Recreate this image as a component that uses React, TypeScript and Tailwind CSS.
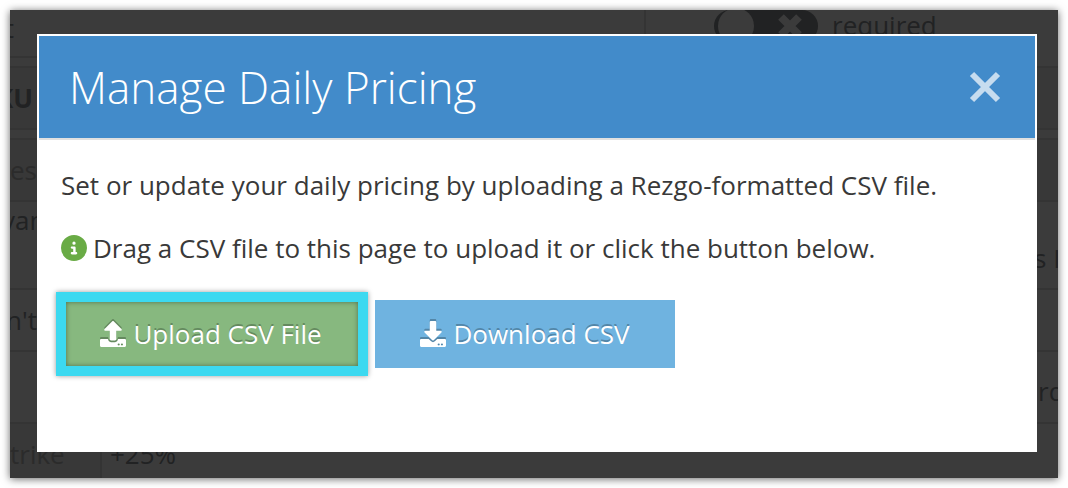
import { FaDownload, FaUpload } from "react-icons/fa";
import { FaCircleInfo } from "react-icons/fa6";

function FormBackdrop() {
  return (
    <div aria-hidden="true" className="absolute inset-0 flex flex-col overflow-hidden text-[26px] leading-9 text-[#212223]">
      <div className="flex h-12 shrink-0">
        <div className="flex w-[636px] shrink-0 border-r-2 border-b-2 border-[#343434]">
          <span className="flex w-1 justify-end">t</span>
        </div>
        <div className="ml-[68px] flex h-8 w-[104px] shrink-0 items-center justify-between rounded-full bg-[#212223] pr-3 pl-1">
          <span className="size-9 shrink-0 rounded-full bg-[#3b3b3b]" />
          <svg viewBox="0 0 32 32" className="size-8" stroke="#3b3b3b" strokeWidth="8">
            <path d="M7 7 25 25M25 7 7 25" />
          </svg>
        </div>
        <span className="ml-[14px] -mt-[3px]">required</span>
      </div>

      <div className="mt-2 flex h-16 shrink-0 items-center border-y-2 border-[#343434] bg-[#383838] font-bold">
        <span className="flex w-[23px] justify-end">SKU</span>
      </div>

      <div className="mt-2 flex h-16 shrink-0 items-center border-y-2 border-[#343434] bg-[#383838]">
        <span className="text-[#2b2b2b]">es</span>
      </div>

      <div className="flex h-[86px] shrink-0 justify-between">
        <span className="-ml-2">van</span>
        <span className="mt-[38px] w-6 whitespace-nowrap">s In</span>
      </div>

      <div className="flex h-16 shrink-0 items-center border-y-2 border-[#343434]">
        <span className="-ml-1">n't</span>
      </div>

      <div className="flex h-[72px] shrink-0 items-center justify-end border-b-2 border-[#343434]">
        <span className="mt-2 w-5">rd</span>
      </div>

      <div className="flex shrink-0 grow">
        <div className="w-[92px] border-r-2 border-[#343434] bg-[#383838] pt-3 text-[#2b2b2b]">trike</div>
        <div className="pt-3 pl-2">+25%</div>
      </div>
    </div>
  );
}

export default function App() {
  return (
    <div className="bg-white p-[10px] font-['Open_Sans','Noto_Sans',sans-serif]">
      <div className="relative bg-[#3b3b3b] pt-6 pr-[21px] pb-[26px] pl-[27px] shadow-[0_1px_8px_rgba(0,0,0,0.6)]">
        <FormBackdrop />

        <div role="dialog" aria-labelledby="dialog-title" className="relative border-2 border-white bg-white text-[#393939]">
          <div className="flex h-[104px] items-center justify-between border-b-2 border-[#e0e0e0] bg-[#428bca] pr-8 pl-[30px]">
            <h1 id="dialog-title" className="text-[44px] leading-[60px] font-light text-white">
              Manage Daily Pricing
            </h1>
            <button type="button" aria-label="Close" className="text-[#c6dcef]">
              <svg viewBox="0 0 36 36" className="size-9" stroke="currentColor" strokeWidth="6">
                <path d="M5 5 31 31M31 5 5 31" />
              </svg>
            </button>
          </div>

          <div className="px-[17px] pt-[27px] pb-[74px] text-[26px] leading-9">
            <p className="px-[5px]">Set or update your daily pricing by uploading a Rezgo-formatted CSV file.</p>
            <p className="mt-[27px] flex items-center gap-[6px] px-[5px]">
              <FaCircleInfo className="size-[26px] shrink-0 text-[#69ab45]" />
              Drag a CSV file to this page to upload it or click the button below.
            </p>

            <div className="mt-[26px] flex items-center gap-[7px] text-white">
              <div className="border-[10px] border-[#3cd9f0] shadow-[0_0_5px_rgba(0,0,0,0.4)]">
                <button
                  type="button"
                  className="flex h-16 w-[292px] items-center justify-center gap-[7px] bg-[#87b87f] pr-[2px] shadow-[inset_0_0_5px_rgba(0,0,0,0.4)] text-shadow-[0_-2px_0_rgba(0,0,0,0.25)]"
                >
                  <FaUpload className="size-[26px] drop-shadow-[0_-2px_0_rgba(0,0,0,0.25)]" />
                  Upload CSV File
                </button>
              </div>
              <button
                type="button"
                className="flex h-[68px] w-[300px] items-center justify-center gap-[7px] bg-[#6fb3e0] text-shadow-[0_-2px_0_rgba(0,0,0,0.25)]"
              >
                <FaDownload className="size-[26px] drop-shadow-[0_-2px_0_rgba(0,0,0,0.25)]" />
                Download CSV
              </button>
            </div>
          </div>
        </div>
      </div>
    </div>
  );
}
